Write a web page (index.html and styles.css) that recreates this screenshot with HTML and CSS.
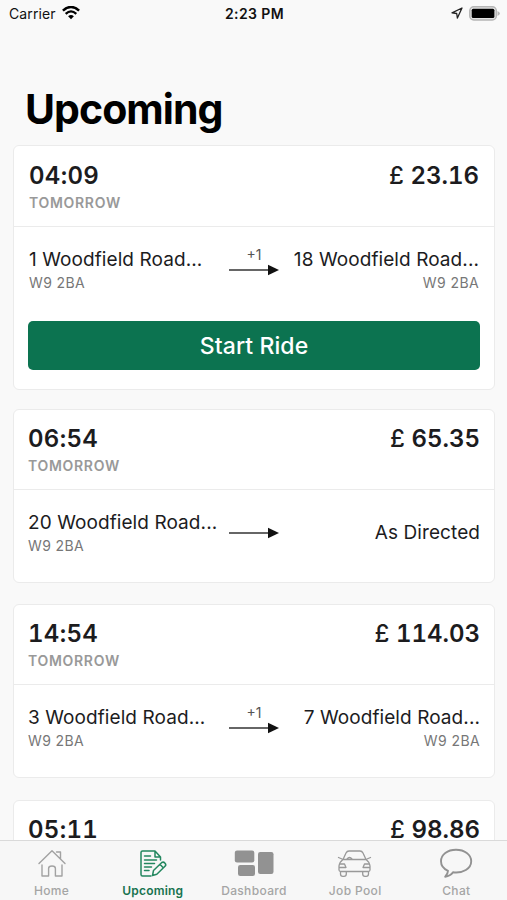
FILE: index.html
```html
<!DOCTYPE html>
<html lang="en">
<head>
<meta charset="utf-8">
<title>Upcoming</title>
<link rel="stylesheet" href="styles.css">
</head>
<body>
<div class="app">
  <header class="status">
    <div class="status-left"><span class="carrier">Carrier</span>
      <svg class="wifi" width="18" height="14" viewBox="0 0 18 14" fill="none" stroke="#000"><path d="M.9 4.7Q9-2.7 17.1 4.7" stroke-width="2.5"/><path d="M3.7 7.8Q9 3 14.3 7.8" stroke-width="2.3"/><path d="M6.1 10.3Q9 7.8 11.9 10.3L9 13.3Z" fill="#000" stroke="none"/></svg>
    </div>
    <div class="clock">2:23 PM</div>
    <div class="status-right">
      <svg width="12" height="12" viewBox="0 0 12 12" fill="none" stroke="#222" stroke-width="1.3" stroke-linejoin="round"><path d="M11 1 1 5.8l4.7.7.7 4.6Z"/></svg>
      <svg width="31" height="15" viewBox="0 0 31 15"><rect x=".8" y=".8" width="26.5" height="13.2" rx="4" fill="#e4e4e4" stroke="#b5b5b5" stroke-width="1.5"/><rect x="2.7" y="2.7" width="22.7" height="9.4" rx="1.5"/><path d="M28.5 5q2.4 1 2.4 2.5t-2.4 2.4Z" fill="#b5b5b5"/></svg>
    </div>
  </header>
  <h1 class="title">Upcoming</h1>
  <main class="rides">
    <article class="card first">
      <div class="top"><div><div class="time">04:09</div><div class="day">TOMORROW</div></div><div class="price"><span class="pound">£</span> 23.16</div></div>
      <div class="route">
        <div class="from"><div class="street">1 Woodfield Road...</div><div class="code">W9 2BA</div></div>
        <div class="via"><span class="stops">+1</span><svg class="arrow" width="50" height="12" viewBox="0 0 50 12"><path d="M0 6H42" stroke="#333" stroke-width="1.5"/><path d="M39 .8 50 6 39 11.2Z" fill="#111"/></svg></div>
        <div class="to"><div class="street">18 Woodfield Road...</div><div class="code">W9 2BA</div></div>
      </div>
      <button class="start">Start Ride</button>
    </article>
    <article class="card">
      <div class="top"><div><div class="time">06:54</div><div class="day">TOMORROW</div></div><div class="price"><span class="pound">£</span> 65.35</div></div>
      <div class="route">
        <div class="from"><div class="street">20 Woodfield Road...</div><div class="code">W9 2BA</div></div>
        <div class="via"><span class="stops"></span><svg class="arrow" width="50" height="12" viewBox="0 0 50 12"><path d="M0 6H42" stroke="#333" stroke-width="1.5"/><path d="M39 .8 50 6 39 11.2Z" fill="#111"/></svg></div>
        <div class="to directed"><div class="street">As Directed</div></div>
      </div>
    </article>
    <article class="card">
      <div class="top"><div><div class="time">14:54</div><div class="day">TOMORROW</div></div><div class="price"><span class="pound">£</span> 114.03</div></div>
      <div class="route">
        <div class="from"><div class="street">3 Woodfield Road...</div><div class="code">W9 2BA</div></div>
        <div class="via"><span class="stops">+1</span><svg class="arrow" width="50" height="12" viewBox="0 0 50 12"><path d="M0 6H42" stroke="#333" stroke-width="1.5"/><path d="M39 .8 50 6 39 11.2Z" fill="#111"/></svg></div>
        <div class="to"><div class="street">7 Woodfield Road...</div><div class="code">W9 2BA</div></div>
      </div>
    </article>
    <article class="card">
      <div class="top"><div><div class="time">05:11</div></div><div class="price"><span class="pound">£</span> 98.86</div></div>
    </article>
  </main>
  <nav class="tabs">
    <a class="tab"><svg width="30" height="30" viewBox="0 0 30 30" fill="none" stroke="#a2a2a2" stroke-width="1.4" stroke-linecap="round" stroke-linejoin="round"><path d="M2 15.500 15 2.800 28 15.500M19.500 4H23.500V10.500M5 17V28H11.600V20.500Q11.600 18 15 18T18.400 20.500V28H25V17"/></svg><span class="label">Home</span></a>
    <a class="tab active"><svg width="30" height="30" viewBox="0 0 30 30" fill="none" stroke="#23875f" stroke-width="1.500" stroke-linecap="round" stroke-linejoin="round"><path d="M22.500 12V9L17 3H4.500Q3 3 3 4.500V26.500Q3 28 4.500 28H13M17 3V9H22.500M6.500 8H12.500M6.500 12H18.500M6.500 15.500H16.500M6.500 19H13.500M6.500 22.500H11"/><path d="M15.500 22.500 23.800 14.500Q25.500 13.500 27 15.200T27 18.300L18.800 26.300 14.500 27.500ZM22 16.300 25.200 19.700"/></svg><span class="label">Upcoming</span></a>
    <a class="tab"><svg width="40" height="30" viewBox="0 0 40 30" fill="#929292"><rect x=".8" y="2.500" width="19.500" height="12" rx="2.200"/><rect x="4" y="17" width="17" height="11" rx="2.200"/><rect x="24" y="4" width="15.500" height="22" rx="2.200"/></svg><span class="label">Dashboard</span></a>
    <a class="tab"><svg width="36" height="30" viewBox="0 0 36 30" fill="none" stroke="#999" stroke-width="1.300" stroke-linejoin="round" stroke-linecap="round"><path d="M6 11.500 9 5Q10 3 12 3H23Q25 3 26 5L29 11.500M6 11.500H29M5 11 1.500 9.500M30 11 33.500 9.500M6 11.500Q2.500 14 2 18V22Q2 23.500 4 23.500H31Q33 23.500 33 22V18Q32.500 14 29 11.500M2.800 16H7.500L9 19.500H2.200M32.200 16H27.500L26 19.500H32.800M3.500 23.500V26Q3.500 28.300 5.800 28.300H7Q9.300 28.300 9.300 26V23.500M25.700 23.500V26Q25.700 28.300 28 28.300H29.200Q31.500 28.300 31.500 26V23.500M10 11Q12.500 8 15 11"/></svg><span class="label">Job Pool</span></a>
    <a class="tab"><svg width="34" height="30" viewBox="0 0 34 30" fill="none" stroke="#929292" stroke-width="1.900" stroke-linejoin="round"><path d="M17 1.700C8.500 1.700 2 6.500 2 13.200 2 17.500 4.500 20.800 9 22.800 9 25.500 7.500 27.200 6.200 28.700 10 28.300 12.500 26.500 14 24.300 24 25.600 32.200 20.500 32.200 13.200 32.200 6.500 25.500 1.700 17 1.700Z"/></svg><span class="label">Chat</span></a>
  </nav>
</div>
</body>
</html>
```
FILE: styles.css
```css
* { box-sizing: border-box; }
body { margin: 0; background: #f9f9f9; font-family: Inter, "Liberation Sans", sans-serif; color: #1c1c1e; }
.app { height: 900px; display: flex; flex-direction: column; overflow: hidden; white-space: nowrap; }
.status { height: 26px; display: grid; grid-template-columns: 1fr auto 1fr; align-items: center; padding: 0 7px 0 9px; color: #111; font-size: 14px; flex: none; }
.status-left { display: flex; align-items: center; gap: 6px; letter-spacing: .1px; }
.clock { font-weight: 600; letter-spacing: .4px; }
.status-right { display: flex; align-items: center; justify-content: flex-end; gap: 6px; }
.title { margin: 60px 0 0 25px; height: 46px; line-height: 46px; font-size: 41px; letter-spacing: -.95px; font-weight: 700; color: #000; flex: none; }
.rides { margin-top: 13px; padding: 0 12px 0 13px; flex: 1; min-height: 0; overflow: hidden; }
.card { height: 174px; background: #fff; border: 1.5px solid #ebebeb; border-radius: 6px; margin-bottom: 21.5px; }
.first { height: 245px; margin-bottom: 18.5px; }
.top { height: 80px; border-bottom: 1.5px solid #ebebeb; display: flex; justify-content: space-between; padding: 14px 14px 0; }
.first .top { height: 81px; padding: 15px 15px 0; }
.time, .price { font-size: 24px; line-height: 30px; font-weight: 600; font-variant-numeric: tabular-nums; }
.time { letter-spacing: .3px; }
.pound { font-weight: 500; font-variant-numeric: proportional-nums; }
.day { color: #999; font-size: 14px; line-height: 18px; font-weight: 600; margin-top: 3px; letter-spacing: .7px; }
.route { height: 76px; padding: 20px 14px 0; display: grid; grid-template-columns: 1fr 50px 1fr; }
.first .route { padding: 20px 15px 0; }
.street { font-size: 19px; line-height: 26px; letter-spacing: .08px; }
.code { font-size: 14px; line-height: 18px; margin-top: 1px; color: #777; letter-spacing: .4px; }
.from { min-width: 0; }
.to { text-align: right; display: flex; flex-direction: column; align-items: flex-end; min-width: 0; }
.directed { padding-top: 10px; }
.via { display: flex; flex-direction: column; align-items: center; margin-top: -1px; }
.stops { height: 18px; font-size: 14px; line-height: 18px; color: #555; }
.start { display: block; width: 452px; height: 49px; margin: 18px auto 0; border: 0; border-radius: 5px; background: #0c7350; color: #fff; font: 500 23px/49px Inter, sans-serif; letter-spacing: .1px; }
.tabs { height: 60px; flex: none; background: #f7f7f7; border-top: 1px solid #dadada; display: grid; grid-template-columns: repeat(5, 1fr); padding-left: 1px; }
.tab { display: flex; flex-direction: column; align-items: center; padding-top: 7px; color: #a5a5a5; font-size: 12px; font-weight: 500; letter-spacing: .35px; }
.label { line-height: 16px; margin-top: 5px; }
.active { color: #17734f; font-weight: 600; letter-spacing: .2px; }
```
